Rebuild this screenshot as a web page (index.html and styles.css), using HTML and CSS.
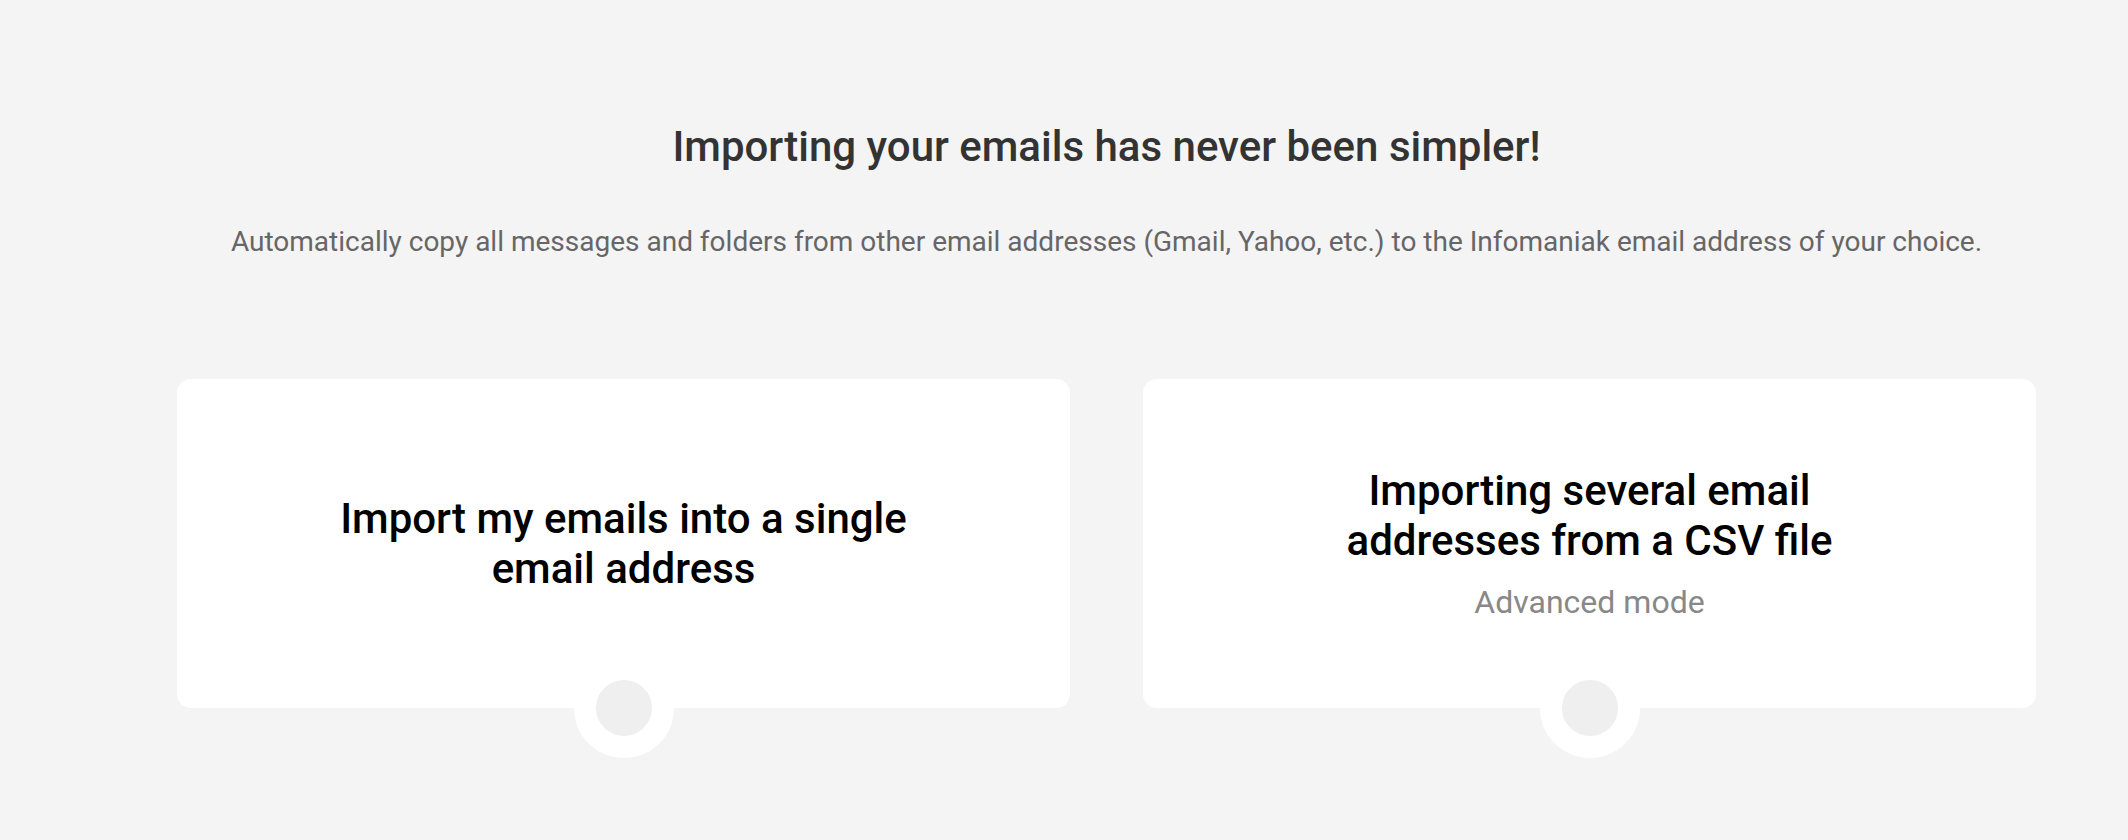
FILE: index.html
```html
<!DOCTYPE html>
<html lang="en">
<head>
    <meta charset="UTF-8">
    <meta name="viewport" content="width=device-width, initial-scale=1.0">
    <title>Import emails</title>
    <link rel="stylesheet" href="styles.css">
</head>
<body>
    <main class="import-page">
        <!-- heading -->
        <header class="intro">
            <h1 class="intro-title">Importing your emails has never been simpler!</h1>
            <p class="intro-text">Automatically copy all messages and folders from other email addresses (Gmail, Yahoo, etc.) to the Infomaniak email address of your choice.</p>
        </header>

        <!-- two import choices -->
        <section class="choices">
            <a class="choice-card" href="#">
                <h2 class="choice-title">Import my emails into a single<br>email address</h2>
                <span class="choice-radio"></span>
            </a>
            <a class="choice-card" href="#">
                <h2 class="choice-title">Importing several email<br>addresses from a CSV file</h2>
                <p class="choice-note">Advanced mode</p>
                <span class="choice-radio"></span>
            </a>
        </section>
    </main>
</body>
</html>
```

FILE: styles.css
```css
html, body {
    margin: 0;
    padding: 0;
}

body {
    background-color: #f4f4f4;
    font-family: Roboto, "Liberation Sans", Arial, sans-serif;
    height: 840px;
    overflow: hidden;
}

.import-page {
    padding: 0 92px 0 177px;
}

.intro {
    text-align: center;
    padding-top: 122px;
}

.intro-title {
    margin: 0;
    font-size: 42px;
    line-height: 50px;
    font-weight: 500;
    color: #333;
}

.intro-text {
    margin: 53px 0 0;
    font-size: 28px;
    line-height: 33px;
    color: #666;
}

.choices {
    display: flex;
    gap: 73px;
    margin-top: 121px;
}

.choice-card {
    position: relative;
    flex: 1;
    height: 329px;
    background: #fff;
    border-radius: 14px;
    display: flex;
    flex-direction: column;
    justify-content: center;
    align-items: center;
    text-align: center;
    text-decoration: none;
    color: #000;
}

.choice-title {
    margin: 0;
    font-size: 42px;
    line-height: 50px;
    font-weight: 500;
}

.choice-note {
    margin: 17px 0 0;
    font-size: 32px;
    line-height: 38px;
    color: #888;
}

/* round marker half out of the card */
.choice-radio {
    position: absolute;
    left: 50%;
    bottom: -50px;
    width: 56px;
    height: 56px;
    margin-left: -50px;
    border: 22px solid #fff;
    border-radius: 50%;
    background: #efefef;
}
```
